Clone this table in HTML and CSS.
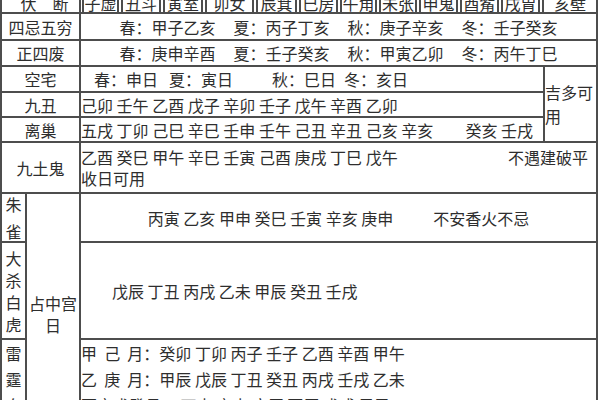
FILE: index.html
```html
<!DOCTYPE html>
<html lang="zh-CN">
<head>
<meta charset="utf-8">
<title>伏断</title>
<link rel="stylesheet" href="styles.css">
</head>
<body>
<div class="sheet">
  <div class="cell span2 head head-label">伏　断</div>
  <div class="cell span2 boxes">
    <div class="box">子虚</div>
    <div class="box">丑斗</div>
    <div class="box">寅室</div>
    <div class="box">卯女</div>
    <div class="box">辰箕</div>
    <div class="box">巳房</div>
    <div class="box">午角</div>
    <div class="box">未张</div>
    <div class="box">申鬼</div>
    <div class="box">酉觜</div>
    <div class="box">戌胃</div>
    <div class="box">亥壁</div>
  </div>

  <div class="cell span2 label">四忌五穷</div>
  <div class="cell span2 seasons">
    <span>春：甲子乙亥</span><span>夏：丙子丁亥</span><span>秋：庚子辛亥</span><span>冬：壬子癸亥</span>
  </div>

  <div class="cell span2 label">正四废</div>
  <div class="cell span2 seasons">
    <span>春：庚申辛酉</span><span>夏：壬子癸亥</span><span>秋：甲寅乙卯</span><span>冬：丙午丁巳</span>
  </div>

  <div class="cell span2 label">空宅</div>
  <div class="cell kongzhai">
    <span class="kz1">春：申日</span><span class="kz2">夏：寅日</span><span class="kz3">秋：巳日</span><span>冬：亥日</span>
  </div>
  <div class="cell rows3 ji">吉多可用</div>

  <div class="cell span2 label">九丑</div>
  <div class="cell">己卯 壬午 乙酉 戊子 辛卯 壬子 戊午 辛酉 乙卯</div>

  <div class="cell span2 label">离巢</div>
  <div class="cell split">
    <span>五戌 丁卯 己巳 辛巳 壬申 壬午 己丑 辛丑 己亥 辛亥</span><span>癸亥 壬戌</span>
  </div>

  <div class="cell span2 label">九土鬼</div>
  <div class="cell span2 two">
    <div class="tline"><span>乙酉 癸巳 甲午 辛巳 壬寅 己酉 庚戌 丁巳 戊午</span><span>不遇建破平</span></div>
    <div>收日可用</div>
  </div>

  <div class="cell vert zhuque">朱雀</div>
  <div class="cell rows3 zhan">占中宫日</div>
  <div class="cell span2 zhuque-c">
    <span>丙寅 乙亥 甲申 癸巳 壬寅 辛亥 庚申</span><span>不安香火不忌</span>
  </div>

  <div class="cell vert">大杀白虎</div>
  <div class="cell span2 dasha">戊辰 丁丑 丙戌 乙未 甲辰 癸丑 壬戌</div>

  <div class="cell vert top">雷霆白虎</div>
  <div class="cell span2 lines">
    <div>甲&nbsp; 己&nbsp; 月：癸卯 丁卯 丙子 壬子 乙酉 辛酉 甲午</div>
    <div>乙&nbsp; 庚&nbsp; 月：甲辰 戊辰 丁丑 癸丑 丙戌 壬戌 乙未</div>
    <div>丙辛戊癸月：&nbsp;丁未 辛未 庚辰 丙辰 戊戌 己丑</div>
  </div>
</div>
</body>
</html>
```

FILE: styles.css
```css
html, body {
  margin: 0;
  padding: 0;
  overflow: hidden;
  background: #fff;
}

body {
  font-family: "Noto Sans CJK SC", "Noto Sans", sans-serif;
  font-size: 16px;
  color: #2e2e2e;
}

.sheet {
  display: grid;
  width: 598px;
  box-sizing: border-box;
  margin-top: -14px;
  padding: 2px;
  gap: 2px;
  background: #4d4d4d;
  grid-template-columns: 23px 52px 462px 1fr;
  grid-template-rows: 24px 25px 24px 24px 23px 23px 49px 47px 95px 94px;
}

.cell {
  background: #fff;
  display: flex;
  align-items: center;
  line-height: 20px;
  white-space: nowrap;
  overflow: hidden;
}

.span2 { grid-column: span 2; }
.rows3 { grid-row: span 3; }

.label { justify-content: center; }

.head { align-items: flex-end; line-height: 16px; padding-bottom: 1px; }
.head-label { justify-content: center; padding-left: 8px; }

.boxes {
  display: grid;
  grid-template-columns: 37px 40px 40px 49px 41px 39px 37px 38px 39px 39px 39px 1fr;
  gap: 2px;
  padding-left: 1px;
  align-items: stretch;
}

.box {
  border-left: 2px solid #4d4d4d;
  border-right: 2px solid #4d4d4d;
  display: flex;
  align-items: flex-end;
  justify-content: center;
  line-height: 16px;
  padding-bottom: 1px;
}

.box:last-child { border-right: none; }

.seasons { justify-content: center; gap: 18px; }

.kongzhai { padding-left: 13px; }
.kz1 { margin-right: 11px; }
.kz2 { margin-right: 39px; }
.kz3 { margin-right: 8px; }

.ji {
  white-space: normal;
  line-height: 24px;
}

.split { justify-content: space-between; padding-right: 10px; }

.two {
  flex-direction: column;
  align-items: stretch;
  justify-content: center;
  line-height: 21px;
  padding-right: 8px;
}

.tline { display: flex; justify-content: space-between; }

.vert {
  white-space: normal;
  justify-content: center;
  text-align: center;
  line-height: 22px;
}

.zhuque { line-height: 27px; }

.vert.top { align-items: flex-start; line-height: 26px; }

.zhan {
  white-space: normal;
  justify-content: center;
  text-align: center;
  line-height: 22px;
}

.zhuque-c { justify-content: center; gap: 40px; }

.dasha { padding-left: 31px; }

.lines {
  display: block;
  line-height: 26px;
}
```
